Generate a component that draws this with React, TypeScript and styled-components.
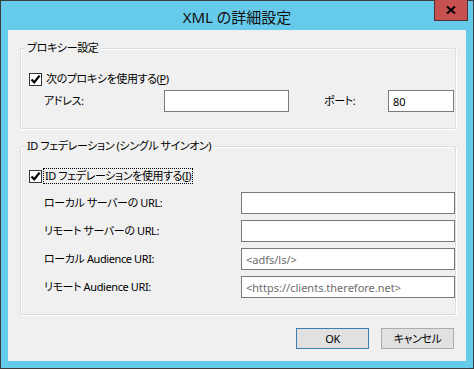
import React from "react";
import styled, { createGlobalStyle } from "styled-components";

const GlobalStyle = createGlobalStyle`
  html, body { margin: 0; padding: 0; background: #ffffff; }
  body {
    font-family: "Noto Sans", "Noto Sans CJK JP", sans-serif;
    font-size: 11px;
    letter-spacing: -0.4px;
    font-feature-settings: "palt";
    color: #000;
  }
`;

const Window = styled.div`
  position: relative;
  width: 474px;
  height: 369px;
  box-sizing: border-box;
  border: 1px solid #3c3c3c;
  background: #66cbea;
  padding: 0 7px 7px;
  display: flex;
  flex-direction: column;
`;

const TitleBar = styled.div`
  height: 29px;
  display: flex;
  align-items: center;
  justify-content: center;
`;

const Title = styled.span`
  font-size: 15px;
  letter-spacing: 0;
  line-height: 18px;
  color: #111;
  margin-top: 2px;
`;

const CloseButton = styled.div`
  position: absolute;
  top: -1px;
  right: 5px;
  width: 34px;
  height: 21px;
  box-sizing: border-box;
  background: #c75050;
  border: 1px solid #4d3434;
  border-top: none;
  display: flex;
  align-items: center;
  justify-content: center;
`;

const Client = styled.div`
  flex: 1;
  background: #f0f0f0;
  padding: 18px 0 0 12px;
  display: flex;
  flex-direction: column;
`;

const Group = styled.div<{ $top?: number }>`
  position: relative;
  width: 436px;
  box-sizing: border-box;
  margin-top: ${(p) => p.$top ?? 0}px;
  border: 1px solid #d5dfe5;
  border-radius: 2px;
  box-shadow: 1px 1px 0 #ffffff, inset 1px 1px 0 #ffffff;
  display: flex;
  flex-direction: column;
`;

const Legend = styled.span`
  position: absolute;
  top: -9px;
  left: 4px;
  padding: 0 2px;
  line-height: 16px;
  background: #f0f0f0;
`;

const CheckRow = styled.div<{ $top: number }>`
  display: flex;
  align-items: center;
  gap: 2px;
  height: 16px;
  margin: ${(p) => p.$top}px 0 0 8px;
`;

const Box = styled.span`
  width: 13px;
  height: 13px;
  box-sizing: border-box;
  border: 1px solid #333;
  background: #fff;
  display: flex;
  align-items: center;
  justify-content: center;
`;

const CheckLabel = styled.span<{ $focused?: boolean }>`
  line-height: 14px;
  padding: 0 1px;
  margin-left: ${(p) => (p.$focused ? -1 : 0)}px;
  border: 1px dotted ${(p) => (p.$focused ? "#000" : "transparent")};
`;

const FieldRow = styled.div<{ $top: number }>`
  display: flex;
  align-items: center;
  height: 22px;
  margin: ${(p) => p.$top}px 0 0 23px;
`;

const Label = styled.span<{ $w: number; $left?: number }>`
  width: ${(p) => p.$w}px;
  margin-left: ${(p) => p.$left ?? 0}px;
  line-height: 16px;
  white-space: nowrap;
`;

const Field = styled.input<{ $w: number }>`
  width: ${(p) => p.$w}px;
  height: 22px;
  box-sizing: border-box;
  border: 1px solid #7a7a7a;
  border-radius: 0;
  background: #fff;
  padding: 0 4px;
  margin: 0;
  font: inherit;
  font-size: 11px;
  letter-spacing: 0;
  color: #000;
  outline: none;
  &::placeholder { color: #6d6d6d; opacity: 1; }
`;

const Footer = styled.div`
  display: flex;
  justify-content: flex-end;
  gap: 12px;
  margin-top: 13px;
  padding-right: 12px;
`;

const Button = styled.div<{ $default?: boolean }>`
  width: 73px;
  height: 21px;
  box-sizing: border-box;
  border: 1px solid ${(p) => (p.$default ? "#3c7fb1" : "#adadad")};
  background: #e1e1e1;
  display: flex;
  align-items: center;
  justify-content: center;
  line-height: 16px;
`;

function Check() {
  return (
    <Box>
      <svg width="11" height="11" viewBox="0 0 11 11">
        <path d="M1.5 5.5 L4.2 8.3 L9.6 1.6" fill="none" stroke="#000" strokeWidth="2.2" />
      </svg>
    </Box>
  );
}

export default function App() {
  return (
    <>
      <GlobalStyle />
      <Window>
        <TitleBar>
          <Title>XML の詳細設定</Title>
        </TitleBar>
        <CloseButton>
          <svg width="10" height="8" viewBox="0 0 10 8">
            <path d="M1 0.5 L9 7.5 M9 0.5 L1 7.5" stroke="#000" strokeWidth="2" />
          </svg>
        </CloseButton>
        <Client>
          <Group>
            <Legend>プロキシー設定</Legend>
            <CheckRow $top={22}>
              <Check />
              <CheckLabel>
                次のプロキシを使用する(<u>P</u>)
              </CheckLabel>
            </CheckRow>
            <FieldRow $top={3} style={{ marginBottom: 16 }}>
              <Label $w={120}>アドレス:</Label>
              <Field $w={125} readOnly value="" />
              <Label $w={64} $left={35}>ポート:</Label>
              <Field $w={66} readOnly value="80" />
            </FieldRow>
          </Group>

          <Group $top={17}>
            <Legend>ID フェデレーション (シングル サインオン)</Legend>
            <CheckRow $top={21}>
              <Check />
              <CheckLabel $focused>
                ID フェデレーションを使用する(<u>I</u>)
              </CheckLabel>
            </CheckRow>
            <FieldRow $top={8}>
              <Label $w={197}>ローカル サーバーの URL:</Label>
              <Field $w={214} readOnly value="" />
            </FieldRow>
            <FieldRow $top={6}>
              <Label $w={197}>リモート サーバーの URL:</Label>
              <Field $w={214} readOnly value="" />
            </FieldRow>
            <FieldRow $top={6}>
              <Label $w={197}>ローカル Audience URI:</Label>
              <Field $w={214} readOnly placeholder="<adfs/ls/>" />
            </FieldRow>
            <FieldRow $top={6} style={{ marginBottom: 16 }}>
              <Label $w={197}>リモート Audience URI:</Label>
              <Field $w={214} readOnly placeholder="<https://clients.therefore.net>" />
            </FieldRow>
          </Group>

          <Footer>
            <Button $default>OK</Button>
            <Button>キャンセル</Button>
          </Footer>
        </Client>
      </Window>
    </>
  );
}
